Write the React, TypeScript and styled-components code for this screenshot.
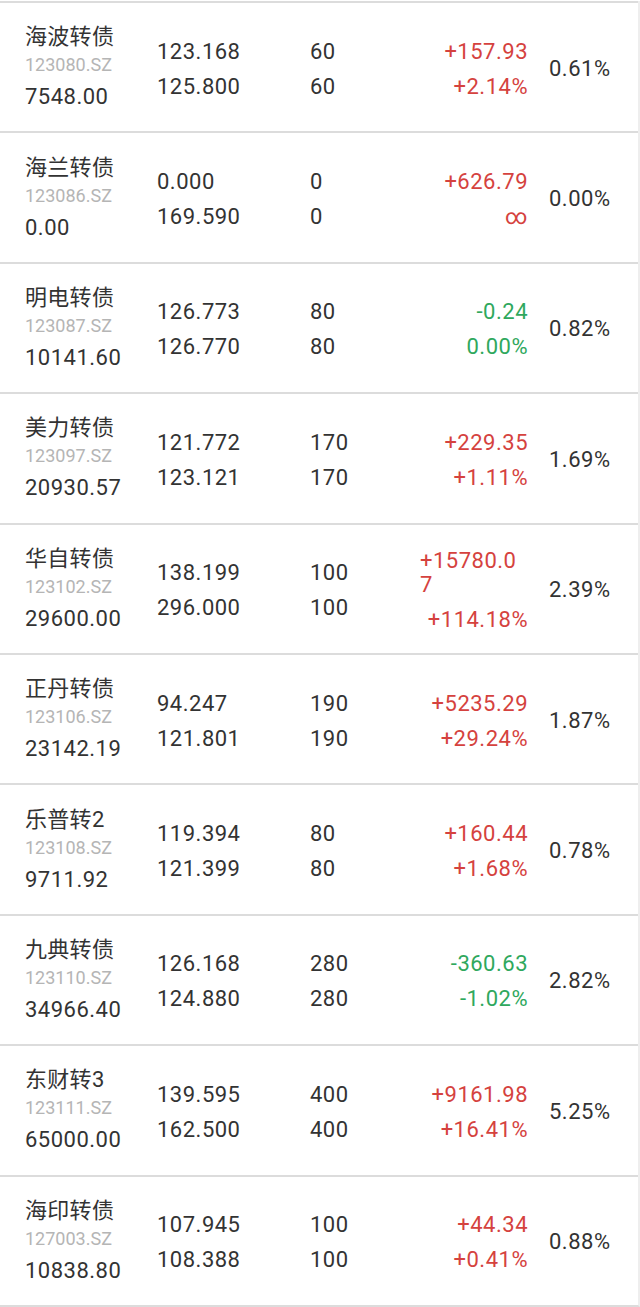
import React from "react";
import styled, { createGlobalStyle } from "styled-components";

const GlobalStyle = createGlobalStyle`
  html, body {
    margin: 0;
    padding: 0;
    background: #ffffff;
  }
  body {
    font-family: Roboto, "Noto Sans CJK SC", sans-serif;
    color: #333333;
  }
`;

type Bond = {
  name: string;
  code: string;
  amount: string;
  price: string;
  cost: string;
  qty: string;
  profit: string;
  rate: string;
  ratio: string;
};

const bonds: Bond[] = [
  { name: "海波转债", code: "123080.SZ", amount: "7548.00", price: "123.168", cost: "125.800", qty: "60", profit: "+157.93", rate: "+2.14%", ratio: "0.61%" },
  { name: "海兰转债", code: "123086.SZ", amount: "0.00", price: "0.000", cost: "169.590", qty: "0", profit: "+626.79", rate: "∞", ratio: "0.00%" },
  { name: "明电转债", code: "123087.SZ", amount: "10141.60", price: "126.773", cost: "126.770", qty: "80", profit: "-0.24", rate: "0.00%", ratio: "0.82%" },
  { name: "美力转债", code: "123097.SZ", amount: "20930.57", price: "121.772", cost: "123.121", qty: "170", profit: "+229.35", rate: "+1.11%", ratio: "1.69%" },
  { name: "华自转债", code: "123102.SZ", amount: "29600.00", price: "138.199", cost: "296.000", qty: "100", profit: "+15780.07", rate: "+114.18%", ratio: "2.39%" },
  { name: "正丹转债", code: "123106.SZ", amount: "23142.19", price: "94.247", cost: "121.801", qty: "190", profit: "+5235.29", rate: "+29.24%", ratio: "1.87%" },
  { name: "乐普转2", code: "123108.SZ", amount: "9711.92", price: "119.394", cost: "121.399", qty: "80", profit: "+160.44", rate: "+1.68%", ratio: "0.78%" },
  { name: "九典转债", code: "123110.SZ", amount: "34966.40", price: "126.168", cost: "124.880", qty: "280", profit: "-360.63", rate: "-1.02%", ratio: "2.82%" },
  { name: "东财转3", code: "123111.SZ", amount: "65000.00", price: "139.595", cost: "162.500", qty: "400", profit: "+9161.98", rate: "+16.41%", ratio: "5.25%" },
  { name: "海印转债", code: "127003.SZ", amount: "10838.80", price: "107.945", cost: "108.388", qty: "100", profit: "+44.34", rate: "+0.41%", ratio: "0.88%" },
];

const List = styled.div`
  margin-top: 1px;
  width: 638px;
  border-right: 2px solid #eeeeee;
  border-bottom: 2px solid #dcdcdc;
`;

const Row = styled.div`
  box-sizing: border-box;
  height: 130.4px;
  border-top: 2px solid #dcdcdc;
  padding: 4px 0 0 25px;
  display: grid;
  grid-template-columns: 132px 153px 110px 108px 1fr;
  align-items: center;
`;

const NameCell = styled.div`
  display: flex;
  flex-direction: column;
`;

const Name = styled.div`
  font-size: 22px;
  line-height: 30px;
  letter-spacing: 0.3px;
`;

const Code = styled.div`
  font-size: 18px;
  line-height: 26px;
  color: #b5b5b5;
`;

const Amount = styled.div`
  font-size: 22px;
  line-height: 38px;
  letter-spacing: 0.5px;
`;

const Pair = styled.div<{ $right?: boolean }>`
  display: flex;
  flex-direction: column;
  gap: 11px;
  align-items: ${(p) => (p.$right ? "flex-end" : "flex-start")};
`;

const Num = styled.div<{ $tone?: "up" | "down" }>`
  font-size: 22px;
  line-height: 24px;
  letter-spacing: 0.5px;
  max-width: 100%;
  word-break: break-all;
  color: ${(p) =>
    p.$tone === "up" ? "#d5423e" : p.$tone === "down" ? "#2fa85d" : "#333333"};
`;

const Ratio = styled.div`
  padding-left: 21px;
  font-size: 22px;
  letter-spacing: 0.5px;
  margin-top: -2px;
`;

const toneOf = (v: string): "up" | "down" => (v.startsWith("-") ? "down" : "up");

const BondRow = ({ b }: { b: Bond }) => {
  const tone = toneOf(b.profit);
  return (
    <Row>
      <NameCell>
        <Name>{b.name}</Name>
        <Code>{b.code}</Code>
        <Amount>{b.amount}</Amount>
      </NameCell>
      <Pair>
        <Num>{b.price}</Num>
        <Num>{b.cost}</Num>
      </Pair>
      <Pair>
        <Num>{b.qty}</Num>
        <Num>{b.qty}</Num>
      </Pair>
      <Pair $right>
        <Num $tone={tone}>{b.profit}</Num>
        <Num $tone={tone}>{b.rate}</Num>
      </Pair>
      <Ratio>{b.ratio}</Ratio>
    </Row>
  );
};

export default function App() {
  return (
    <>
      <GlobalStyle />
      <List>
        {bonds.map((b) => (
          <BondRow key={b.code} b={b} />
        ))}
      </List>
    </>
  );
}
